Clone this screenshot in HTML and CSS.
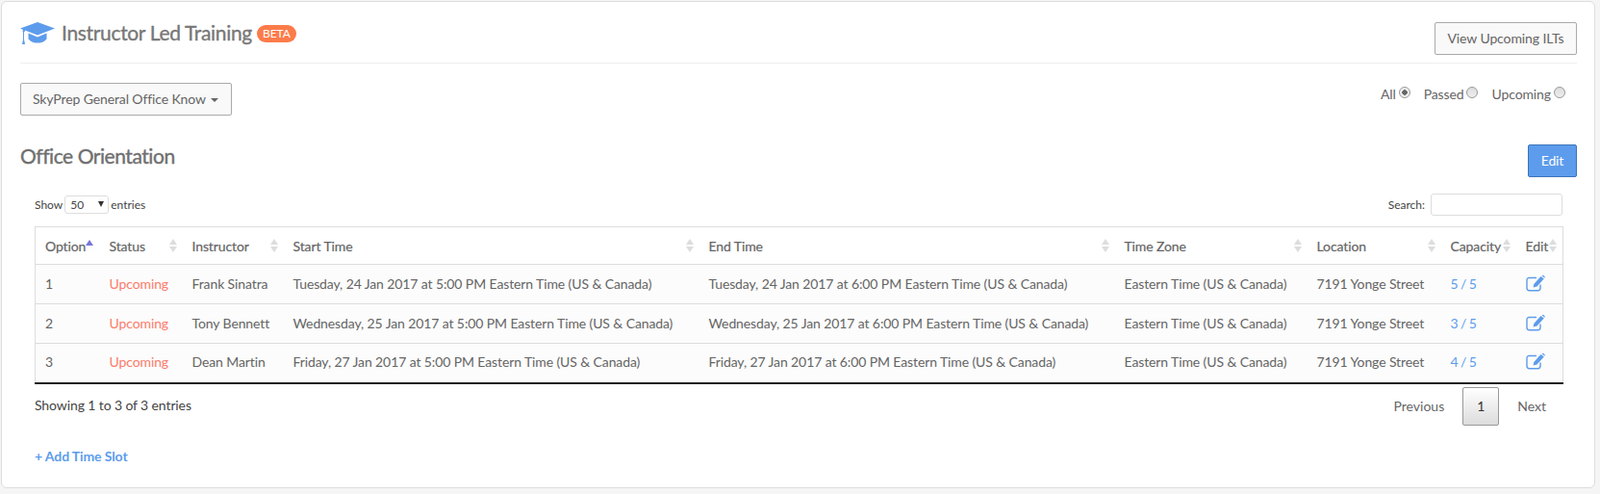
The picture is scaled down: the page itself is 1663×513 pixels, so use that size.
FILE: index.html
```html
<!DOCTYPE html>
<html>
<head>
    <title>Instructor Led Training</title>
    <link rel="stylesheet" href="styles.css">
</head>
<body>
    <div class="card">
        <div class="page-head">
            <div class="page-title">
                <svg class="cap-icon" width="36" height="24" viewBox="0 0 36 24">
                    <path fill="#5d9cec" d="M18 0 L36 6.5 L18 13.5 L5 8.6 L5 9.5 L4 10 L4 18 L5 23 L2 23 L3 18 L3 10 L2.2 9 L3.2 8 L0 6.5 Z"/>
                    <path fill="#5d9cec" d="M8.5 11.6 L18 15.4 L27.5 11.6 L27.5 17.5 C25 20.5 21.5 21.6 18 21.6 C14.5 21.6 11 20.5 8.5 17.5 Z"/>
                </svg>
                <h1>Instructor Led Training</h1>
                <span class="beta">BETA</span>
            </div>
            <button class="btn">View Upcoming ILTs</button>
        </div>

        <div class="filters">
            <button class="btn course-btn">SkyPrep General Office Know <span class="caret"></span></button>
            <div class="radios">
                <label>All <span class="radio on"></span></label>
                <label>Passed <span class="radio"></span></label>
                <label>Upcoming <span class="radio"></span></label>
            </div>
        </div>

        <div class="section-head">
            <h2>Office Orientation</h2>
            <button class="btn btn-blue">Edit</button>
        </div>

        <div class="table-wrap">
            <div class="table-top">
                <div class="length">Show
                    <span class="select">50 <i></i></span>
                    entries</div>
                <div class="search">Search: <input type="text"></div>
            </div>
            <table>
                <colgroup>
                    <col class="c1"><col class="c2"><col class="c3"><col class="c4"><col class="c5"><col class="c6"><col class="c7"><col class="c8"><col class="c9">
                </colgroup>
                <thead>
                    <tr>
                        <th><div class="th">Option<span class="sort-up"></span></div></th>
                        <th><div class="th">Status<span class="sort"></span></div></th>
                        <th><div class="th">Instructor<span class="sort"></span></div></th>
                        <th><div class="th">Start Time<span class="sort"></span></div></th>
                        <th><div class="th">End Time<span class="sort"></span></div></th>
                        <th><div class="th">Time Zone<span class="sort"></span></div></th>
                        <th><div class="th">Location<span class="sort"></span></div></th>
                        <th><div class="th">Capacity<span class="sort"></span></div></th>
                        <th><div class="th">Edit<span class="sort"></span></div></th>
                    </tr>
                </thead>
                <tbody>
                    <tr>
                        <td>1</td>
                        <td class="upcoming">Upcoming</td>
                        <td>Frank Sinatra</td>
                        <td>Tuesday, 24 Jan 2017 at 5:00 PM Eastern Time (US &amp; Canada)</td>
                        <td>Tuesday, 24 Jan 2017 at 6:00 PM Eastern Time (US &amp; Canada)</td>
                        <td>Eastern Time (US &amp; Canada)</td>
                        <td>7191 Yonge Street</td>
                        <td class="link">5 / 5</td>
                        <td class="edit"><svg width="20" height="17" viewBox="0 0 20 17"><path fill="none" stroke="#5d9cec" stroke-width="1.4" d="M11 2.5 H3.5 Q1 2.5 1 5 V13 Q1 15.7 3.5 15.7 H12.5 Q15 15.7 15 13 V9.5"/><path fill="#5d9cec" d="M15.5 1 L18.8 3.6 L11.5 11.6 L7.6 12.6 L8.3 9 Z M16.5 .2 L18 -.2 L19.8 1.6 L19.4 2.8 Z"/></svg></td>
                    </tr>
                    <tr>
                        <td>2</td>
                        <td class="upcoming">Upcoming</td>
                        <td>Tony Bennett</td>
                        <td>Wednesday, 25 Jan 2017 at 5:00 PM Eastern Time (US &amp; Canada)</td>
                        <td>Wednesday, 25 Jan 2017 at 6:00 PM Eastern Time (US &amp; Canada)</td>
                        <td>Eastern Time (US &amp; Canada)</td>
                        <td>7191 Yonge Street</td>
                        <td class="link">3 / 5</td>
                        <td class="edit"><svg width="20" height="17" viewBox="0 0 20 17"><path fill="none" stroke="#5d9cec" stroke-width="1.4" d="M11 2.5 H3.5 Q1 2.5 1 5 V13 Q1 15.7 3.5 15.7 H12.5 Q15 15.7 15 13 V9.5"/><path fill="#5d9cec" d="M15.5 1 L18.8 3.6 L11.5 11.6 L7.6 12.6 L8.3 9 Z M16.5 .2 L18 -.2 L19.8 1.6 L19.4 2.8 Z"/></svg></td>
                    </tr>
                    <tr>
                        <td>3</td>
                        <td class="upcoming">Upcoming</td>
                        <td>Dean Martin</td>
                        <td>Friday, 27 Jan 2017 at 5:00 PM Eastern Time (US &amp; Canada)</td>
                        <td>Friday, 27 Jan 2017 at 6:00 PM Eastern Time (US &amp; Canada)</td>
                        <td>Eastern Time (US &amp; Canada)</td>
                        <td>7191 Yonge Street</td>
                        <td class="link">4 / 5</td>
                        <td class="edit"><svg width="20" height="17" viewBox="0 0 20 17"><path fill="none" stroke="#5d9cec" stroke-width="1.4" d="M11 2.5 H3.5 Q1 2.5 1 5 V13 Q1 15.7 3.5 15.7 H12.5 Q15 15.7 15 13 V9.5"/><path fill="#5d9cec" d="M15.5 1 L18.8 3.6 L11.5 11.6 L7.6 12.6 L8.3 9 Z M16.5 .2 L18 -.2 L19.8 1.6 L19.4 2.8 Z"/></svg></td>
                    </tr>
                </tbody>
            </table>
            <div class="table-bottom">
                <div class="info">Showing 1 to 3 of 3 entries</div>
                <div class="pager">
                    <span class="page-link">Previous</span>
                    <span class="page-current">1</span>
                    <span class="page-link">Next</span>
                </div>
            </div>
        </div>

        <a class="add-slot" href="#">+ Add Time Slot</a>
    </div>
</body>
</html>
```

FILE: styles.css
```css
html, body { height: 100%; }
body { margin: 0; background: #f5f5f5; font-family: Lato, sans-serif; font-size: 14px; letter-spacing: -0.11px; color: #656565; overflow: hidden; }
.card { box-sizing: border-box; width: 1657px; height: 506px; margin: 1px 0 0 1px; padding: 0 18px 0 19px; background: #fff; border: 1px solid #ddd; border-radius: 6px; }

.page-head { display: flex; justify-content: space-between; height: 64px; border-bottom: 1px solid #eee; box-sizing: border-box; }
.page-title { display: flex; align-items: center; height: 62px; }
.cap-icon { margin-right: 7px; margin-top: 4px; }
h1 { margin: 0; font-size: 21px; font-weight: 400; letter-spacing: -0.33px; color: #777; -webkit-text-stroke: 0.35px #777; }
.beta { margin-left: 5px; margin-top: 4px; padding: 0 6px; background: #fc7b4a; color: #fff; font-size: 12px; letter-spacing: 0; line-height: 18px; border-radius: 9px; }

.btn { box-sizing: border-box; height: 34px; padding: 0 12px 2px; background: #f9f9f9; border: 1px solid #aaa; border-radius: 2px; font-family: Lato, sans-serif; font-size: 14px; letter-spacing: -0.11px; color: #656565; white-space: nowrap; }
.page-head .btn { width: 148px; padding: 0 0 2px; margin-top: 21px; }

.filters { display: flex; justify-content: space-between; padding-top: 20px; height: 34px; }
.course-btn { width: 220px; text-align: left; }
.caret { display: inline-block; margin-left: 2px; vertical-align: 2px; border-left: 4px solid transparent; border-right: 4px solid transparent; border-top: 4px solid #656565; }
.radios { display: flex; gap: 14px; margin-top: 1px; margin-right: 12px; font-size: 14px; }
.radios label { display: flex; gap: 3px; height: 20px; align-items: center; }
.radio { box-sizing: border-box; width: 12px; height: 12px; margin-top: -2px; border: 1px solid #999; border-radius: 50%; background: linear-gradient(#ddd, #eee); }
.radio.on { background: radial-gradient(circle, #666 0 2.5px, #eee 3px); }

.section-head { display: flex; justify-content: space-between; align-items: flex-start; margin-top: 30px; height: 34px; }
h2 { margin: -1px 0 0; font-size: 21px; font-weight: 400; letter-spacing: -0.45px; color: #707070; -webkit-text-stroke: 0.4px #707070; }
.btn-blue { width: 51px; padding: 0 0 2px; background: #5d9cec; border-color: #3b74b8; color: #fff; }

.table-wrap { padding: 0 15px; margin-top: 16px; }
.table-top { display: flex; justify-content: space-between; align-items: center; height: 24px; font-size: 12px; letter-spacing: 0; color: #444; }
.length { display: flex; align-items: center; gap: 2px; }
.select { box-sizing: border-box; display: block; width: 46px; height: 19px; padding-left: 5px; border: 1px solid #ddd; border-radius: 3px; line-height: 17px; }
.select i { display: inline-block; margin-left: 12px; vertical-align: 2px; border-left: 3px solid transparent; border-right: 3px solid transparent; border-top: 6px solid #333; }
.search { display: flex; align-items: center; gap: 6px; }
.search input { box-sizing: border-box; width: 137px; height: 23px; border: 1px solid #ddd; border-radius: 3px; }

table { width: 1588px; margin-top: 11px; table-layout: fixed; border-collapse: collapse; border: 1px solid #ddd; border-bottom: 2px solid #222; }
.c1 { width: 67px; } .c2 { width: 86px; } .c3 { width: 105px; } .c4 { width: 432px; } .c5 { width: 432px; }
.c6 { width: 200px; } .c7 { width: 139px; } .c8 { width: 78px; } .c9 { width: 49px; }
th { height: 38px; padding: 0 6px 0 10px; text-align: left; font-weight: 400; font-size: 14px; color: #656565; border-bottom: 1px solid #ddd; -webkit-text-stroke: 0.2px #656565; }
td { box-sizing: border-box; height: 41px; padding: 0 0 2px 10px; font-size: 14px; background: #fcfcfc; border-bottom: 1px solid #ddd; white-space: nowrap; }
tbody tr:last-child td { border-bottom: 0; }
.th { display: flex; justify-content: space-between; align-items: center; }
.sort { display: flex; flex-direction: column; flex: none; gap: 2px; }
.sort::before, .sort::after { content: ""; border-left: 4px solid transparent; border-right: 4px solid transparent; }
.sort::before { border-bottom: 6px solid #ddd; }
.sort::after { border-top: 6px solid #ddd; }
.sort-up { flex: none; margin: 0 auto 7px 0; border-left: 4px solid transparent; border-right: 4px solid transparent; border-bottom: 6px solid #7676d8; }
.upcoming { color: #fc7b6a; }
.link { color: #5d9cec; word-spacing: -1px; }
.edit svg { display: block; overflow: visible; }

.table-bottom { display: flex; justify-content: space-between; }
.info { padding-top: 13px; font-size: 14px; color: #444; }
.pager { display: flex; align-items: center; gap: 19px; margin-top: 3px; padding-right: 17px; }
.page-link { font-size: 14px; letter-spacing: 0; color: #666; }
.page-current { box-sizing: border-box; width: 38px; height: 40px; line-height: 38px; text-align: center; color: #333; border: 1px solid #999; border-radius: 2px; background: linear-gradient(#fff, #dcdcdc); }

.add-slot { display: inline-block; margin-left: 15px; margin-top: 23px; color: #5d9cec; font-size: 14px; font-weight: 700; text-decoration: none; }
```
